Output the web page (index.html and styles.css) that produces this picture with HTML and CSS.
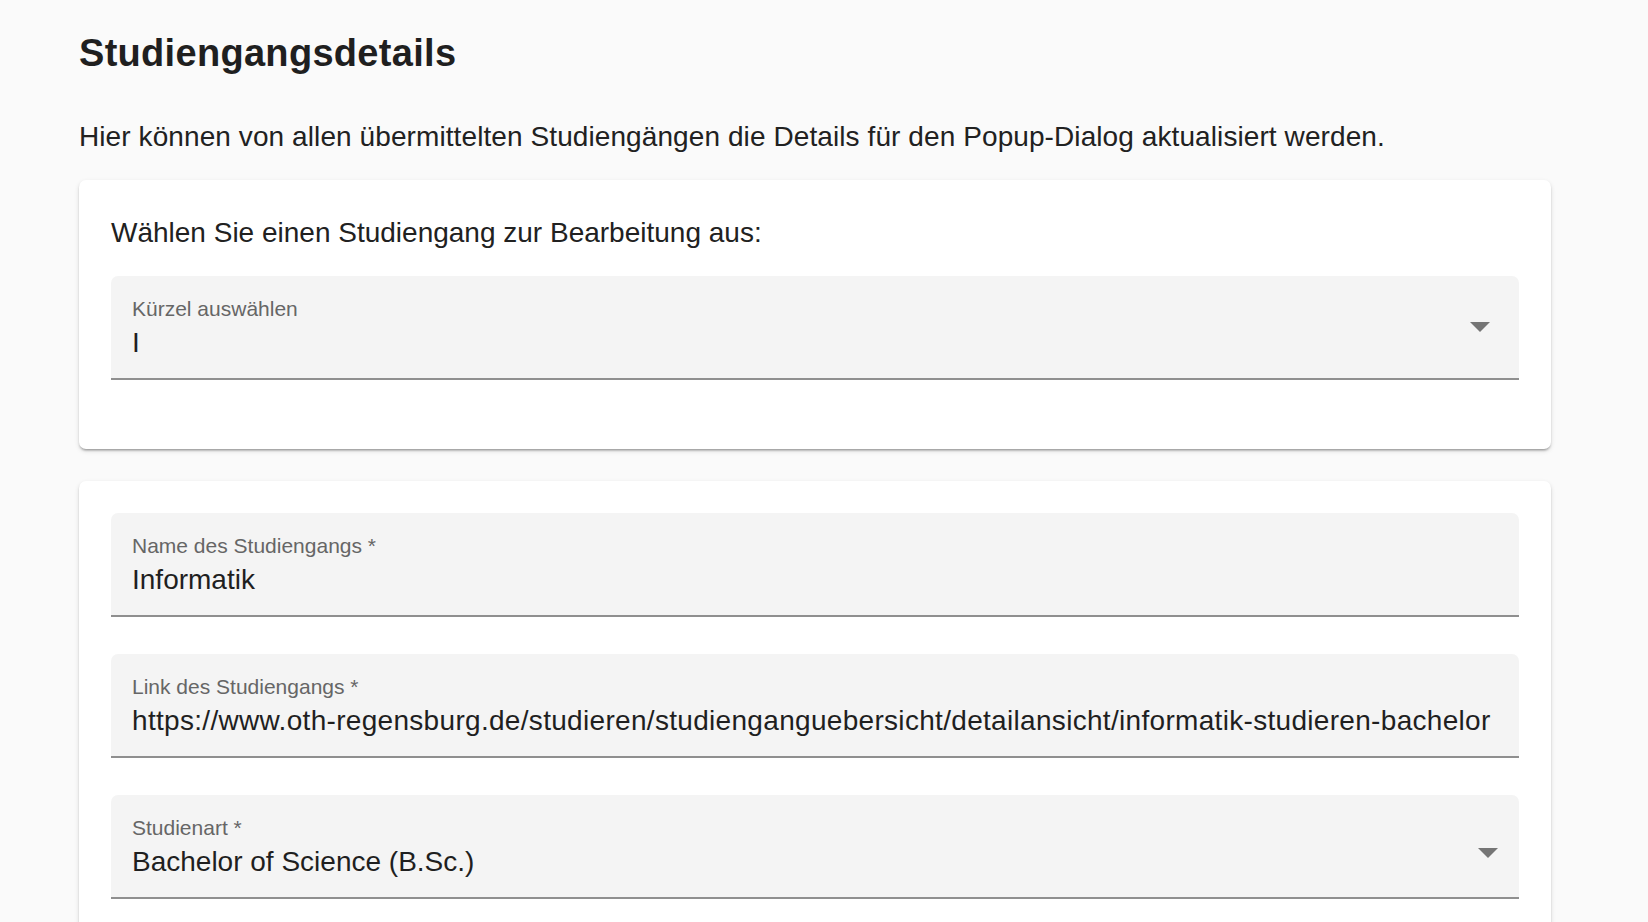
FILE: index.html
```html
<!DOCTYPE html>
<html lang="de">
<head>
<meta charset="utf-8">
<title>Studiengangsdetails</title>
<link rel="stylesheet" href="styles.css">
</head>
<body>
<main class="page">
  <h1 class="title">Studiengangsdetails</h1>
  <p class="intro">Hier können von allen übermittelten Studiengängen die Details für den Popup-Dialog aktualisiert werden.</p>

  <section class="card">
    <p class="card-text">Wählen Sie einen Studiengang zur Bearbeitung aus:</p>
    <div class="field field-first">
      <span class="label">Kürzel auswählen</span>
      <span class="value">I</span>
      <span class="arrow arrow-auto"></span>
    </div>
  </section>

  <section class="card">
    <div class="field">
      <span class="label">Name des Studiengangs *</span>
      <span class="value">Informatik</span>
    </div>
    <div class="field">
      <span class="label">Link des Studiengangs *</span>
      <span class="value value-link">https://www.oth-regensburg.de/studieren/studienganguebersicht/detailansicht/informatik-studieren-bachelor</span>
    </div>
    <div class="field">
      <span class="label">Studienart *</span>
      <span class="value">Bachelor of Science (B.Sc.)</span>
      <span class="arrow arrow-select"></span>
    </div>
  </section>
</main>
</body>
</html>
```

FILE: styles.css
```css
html, body {
  margin: 0;
  padding: 0;
  background: #fafafa;
}

body {
  font-family: "Liberation Sans", Arial, Helvetica, sans-serif;
  color: #212121;
}

.page {
  width: 1472px;
  margin-left: 79px;
  display: flex;
  flex-direction: column;
}

.title {
  margin: 31px 0 0 0;
  font-size: 38px;
  line-height: 45.6px;
  font-weight: 700;
  letter-spacing: 0.3px;
  color: #1f1f1f;
}

.intro {
  margin: 39.7px 0 0 0;
  font-size: 28px;
  line-height: 42px;
  letter-spacing: 0.09px;
  color: #212121;
}

.card {
  margin-top: 21.7px;
  background: #ffffff;
  border-radius: 7px;
  padding: 32px 32px 32px 32px;
  box-shadow: 0 3px 2px -2px rgba(0, 0, 0, 0.2), 0 2px 2px 0 rgba(0, 0, 0, 0.14), 0 2px 5px 0 rgba(0, 0, 0, 0.12);
  display: flex;
  flex-direction: column;
}

.card + .card {
  margin-top: 32px;
}

.card-text {
  margin: 0;
  font-size: 28px;
  line-height: 42px;
  color: #212121;
}

.field {
  position: relative;
  background: #f4f4f4;
  border-radius: 7px 7px 0 0;
  border-bottom: 2px solid #8f8f8f;
  padding: 22px 21px 17px 21px;
  display: flex;
  flex-direction: column;
  margin-bottom: 37px;
}

.field-first {
  margin-top: 22px;
}

.label {
  font-size: 21px;
  line-height: 21px;
  color: #666666;
  white-space: nowrap;
}

.value {
  margin-top: 6px;
  font-size: 28px;
  line-height: 36px;
  color: #1f1f1f;
  white-space: nowrap;
  overflow: hidden;
}

.value-link {
  letter-spacing: 0.31px;
}

.arrow {
  position: absolute;
  width: 0;
  height: 0;
  border-left: 10px solid transparent;
  border-right: 10px solid transparent;
  border-top: 10px solid #757575;
}

.arrow-auto {
  right: 29px;
  top: 46px;
}

.arrow-select {
  right: 21px;
  top: 53px;
}
```
